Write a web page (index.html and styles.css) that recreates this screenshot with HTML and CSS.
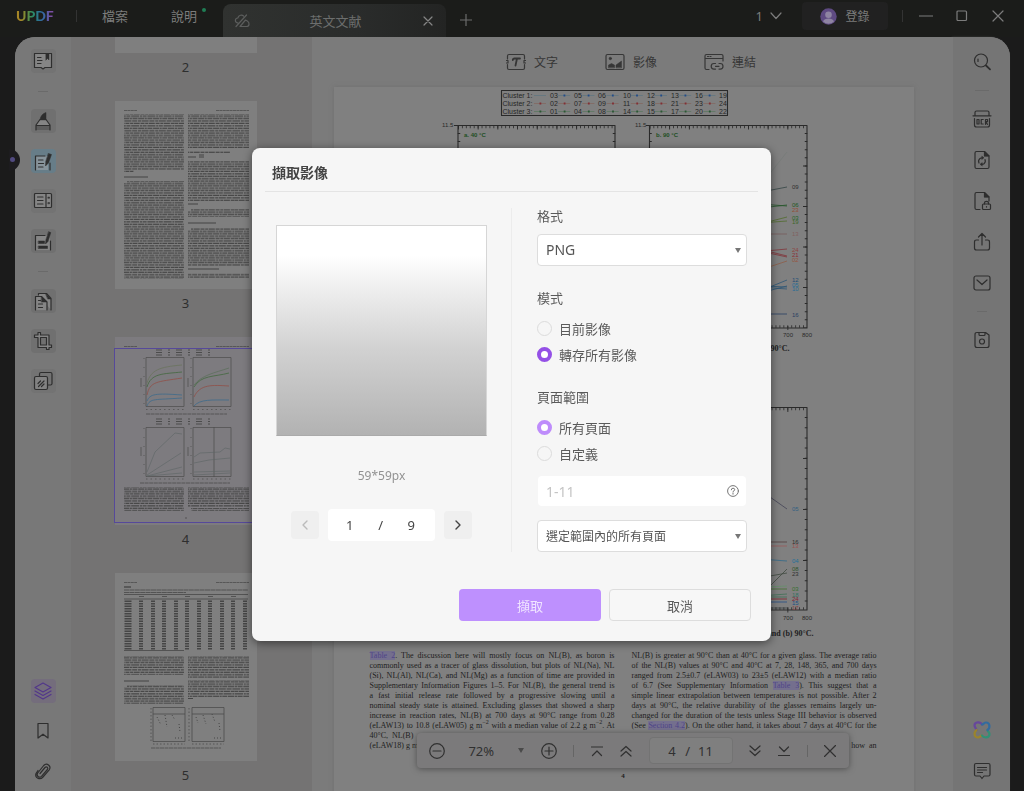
FILE: index.html
```html
<!DOCTYPE html>
<html lang="zh-Hant">
<head>
<meta charset="utf-8">
<title>UPDF</title>
<meta name="viewport" content="width=device-width, initial-scale=1">
<link rel="stylesheet" href="styles.css">
</head>
<body>
<div class="app">
  <header class="titlebar">
    <span class="logo">UPDF</span>
    <span class="bar-sep"></span>
    <nav class="menu">
      <button type="button" class="menu-item">檔案</button>
      <button type="button" class="menu-item">說明<i class="menu-dot"></i></button>
    </nav>
    <div class="tab">
      <svg class="tab-icon" width="16" height="14" viewBox="0 0 16 14"><path d="M2 12.500 12.500 1M4 9C.5 8.500.5 4.500 3.800 4 4.800.8 8 .5 9.500 2M6 12.500h6.500c3 0 3.500-4 .8-5.500L11.500 6z"/></svg>
      <span class="tab-name">英文文献</span>
      <button type="button" class="icon-btn tab-close" aria-label="關閉分頁"><svg width="10" height="10" viewBox="0 0 10 10"><path d="m1 1 8 8M9 1 1 9"/></svg></button>
    </div>
    <button type="button" class="icon-btn add-tab" aria-label="新增分頁"><svg width="12" height="12" viewBox="0 0 12 12"><path d="M6 0v12M0 6h12"/></svg></button>
    <div class="window-tools">
      <button type="button" class="icon-btn count">1<svg width="12" height="8" viewBox="0 0 12 8"><path d="m1 1 5 5.500L11 1"/></svg></button>
      <button type="button" class="login">
        <svg width="17" height="17" viewBox="0 0 17 17"><circle cx="8.500" cy="8.500" r="8.200" fill="#5e4a82" stroke="none"/><circle cx="8.500" cy="6.800" r="3.300" fill="#8e84a2" stroke="none"/><path d="M3 13.500c1-4 10-4 11 0a8 8 0 0 1-11 0z" fill="#8e84a2" stroke="none"/></svg>
        登錄
      </button>
      <span class="bar-sep"></span>
      <button type="button" class="icon-btn win first" aria-label="最小化"><svg width="14" height="14" viewBox="0 0 14 14"><path d="M0 7h14"/></svg></button>
      <button type="button" class="icon-btn win" aria-label="最大化"><svg width="12" height="12" viewBox="0 0 12 12"><rect x="1" y="1" width="9.500" height="9.500" rx="1"/></svg></button>
      <button type="button" class="icon-btn win" aria-label="關閉"><svg width="12" height="12" viewBox="0 0 12 12"><path d="m1 1 10 10M11 1 1 11"/></svg></button>
    </div>
  </header>

  <main class="workspace">
    <span class="notch"><i></i></span>
    <aside class="rail rail-left">
      <button type="button" class="tool" aria-label="閱讀"><span class="tile plain"><svg viewBox="0 0 20 20"><path d="M1.500 2.500h17v14H12L10 18l-2-1.500H1.500z" fill="#858585"/><path d="M4.500 6.500h3.500M4.500 9.500H9M4.500 12.500h3.500"/><path class="f" d="M13 2.500h3V9l-1.500-1.500L13 9z"/></svg></span></button>
      <i class="rail-sep"></i>
      <button type="button" class="tool" aria-label="註解"><span class="tile"><svg viewBox="0 0 20 20"><path d="M3 19v-5l4-5.500h6l4 5.500v5z" fill="#858585" stroke="none"/><path d="M3 15h14v4H3z" fill="#5c5c5c" stroke="none"/><path d="M3 19v-5l4-5.500h6l4 5.500v5M3 14.500h14"/><path class="f" d="M7 8.500q1-5.500 6-7v7z"/></svg></span></button>
      <button type="button" class="tool" aria-label="編輯 PDF"><span class="tile active"><svg viewBox="0 0 20 20"><path d="M2.500 5H15v14H2.500z" fill="#87939a" stroke="none"/><path d="M2.500 19V5h9.500M17 12v7M5.500 9h4.500M5.500 12.500h5M5.500 16h4.500"/><path class="f" d="m15.500 2.500 3 1L15.500 12l-3 3 .3-4.500z"/></svg></span></button>
      <button type="button" class="tool" aria-label="頁面"><span class="tile plain"><svg viewBox="0 0 20 20"><rect x="1.500" y="2.500" width="17" height="14" rx="1" fill="#858585"/><path d="M13 2.500v14M4.500 6h5.500M4.500 9.500h5.500M4.500 13h5.500"/><path class="f" d="M15.200 6h1.300v1.300h-1.300zM15.200 11.500h1.300v1.300h-1.300z"/></svg></span></button>
      <button type="button" class="tool" aria-label="表單"><span class="tile"><svg viewBox="0 0 20 20"><path d="M3 4.500h14V19H3z" fill="#858585" stroke="none"/><path d="M2.500 19V4.500H12M17.500 10v9"/><path class="f" d="M5.500 10h6v2.500h-6zM5.500 15h9v2.500h-9zM15.800.8l2 .8L15 10.500l-2.500 2.500.4-4z"/></svg></span></button>
      <i class="rail-sep"></i>
      <button type="button" class="tool" aria-label="轉換"><span class="tile"><svg viewBox="0 0 20 20"><path d="M5.500 4V2.500h8L18 7.500V19M2.500 19V5.500h6L14 11v8" fill="#858585" stroke="none"/><path d="M5.500 4V2.500h8L18 7.500V19M2.500 19V5.500h6L14 11v8M5.500 9.500h2M5.500 13h4M5.500 16.500h4"/><path class="f" d="M8.500 5.500 14 11H8.500zM12.500 2.500 18 8h-3z"/></svg></span></button>
      <button type="button" class="tool" aria-label="裁剪"><span class="tile"><svg viewBox="0 0 20 20"><path fill="#858585" fill-rule="evenodd" d="M5 1.500h2.500V4H16v10h2.500v2.500H16v2h-2.500v-2H5v-10H1.500V4H5zM7.500 6.500V14h6V6.500z"/></svg></span></button>
      <button type="button" class="tool" aria-label="浮水印"><span class="tile plain"><svg viewBox="0 0 20 20"><rect x="6.500" y="1.500" width="12.500" height="12.500" rx="1.500"/><rect x="1.500" y="5.500" width="13" height="13" rx="1.500" fill="#828282"/><path d="m5 12.500 2.500-2.500M5.500 15.500l5.500-5.500M8.500 15.500l2.500-2.500"/></svg></span></button>
      <span class="rail-space"></span>
      <button type="button" class="tool violet" aria-label="縮圖"><span class="tile"><svg viewBox="0 0 20 20"><path d="m10 2 8 4.500-8 4.500-8-4.500zM2 10l8 4.500L18 10M2 13.500 10 18l8-4.500"/></svg></span></button>
      <button type="button" class="tool" aria-label="書籤"><span class="tile bare"><svg viewBox="0 0 20 20"><path d="M5 2.500h10V17l-5-3.800L5 17z"/></svg></span></button>
      <button type="button" class="tool" aria-label="附件"><span class="tile bare"><svg viewBox="0 0 20 20"><path d="m7 12.500 5-6c1.500-1.600 3.700.3 2.400 2L8.500 15.300c-2.200 2.300-5.700-.5-3.800-3.300l6-7.500c3-3.500 8 .5 5.500 4.300L10 16c-3 3.500-8.500 1-7-3.500L5 9.500"/></svg></span></button>
    </aside>

    <section class="thumbs" aria-label="縮圖">
      <svg width="0" height="0" class="defs"><defs>
        <pattern id="txt" width="60" height="9.600" patternUnits="userSpaceOnUse">
          <g stroke="#454545" stroke-width="1.100" stroke-linecap="butt"><path d="M0 .8h60" stroke-dasharray="5 .8 3 .6 7 .8"/><path d="M0 3.200h60" stroke-dasharray="3 .6 6 .8 4 .7"/><path d="M0 5.600h60" stroke-dasharray="8 .8 2 .6 4 .8"/><path d="M0 8h60" stroke-dasharray="2 .6 5 .7 6 .6"/></g>
        </pattern>
        <g id="head" stroke="#4c4c4c" stroke-width=".8"><path d="M9 9.500h13M101 9.500h33" stroke-dasharray="3 .4"/></g>
      </defs></svg>

      <figure class="thumb"><div class="sheet sliver"></div><figcaption>2</figcaption></figure>
      <figure class="thumb"><div class="sheet">
        <svg viewBox="0 0 142 188"><use href="#head"/><g fill="url(#txt)">
          <path d="M9 13h60v56H9zM9 69h10v2H9zM12 80h57v2H12zM9 82h60v96H9zM73 13h61v34H73zM73 50h42v2H73zM73 60h61v40H73zM76 108h58v2H76zM73 110h61v6H73zM76 127h58v2H76zM73 129h61v36H73zM73 172h61v5H73z"/></g>
          <g stroke="#444" stroke-width="1"><path d="M9 76h24M73 56h8m3 0h5M84 54h5M73 103h10M73 122h28M73 168h31"/></g></svg>
      </div><figcaption>3</figcaption></figure>
      <figure class="thumb current"><div class="sheet">
        <svg viewBox="0 0 142 188"><use href="#head"/>
          <g fill="none" stroke="#4c4c4c" stroke-width=".7"><path d="M31 20.500h38v49H31zM78 20.500h38v49H78zM31 90.500h38v49H31zM78 90.500h38v49H78zM99 90v50"/><path d="M41 13h56M41 15.500h56M41 18h56M41 82h56M41 84.500h56M41 87h56" stroke-dasharray="6 6 2 6" stroke-width="1"/><path d="M31 72.500h38M78 72.500h38M31 142h38M78 142h38" stroke-dasharray="1.500 3"/><path d="M29 21v49M76 21v49M29 91v49M76 91v49" stroke-dasharray="1 8"/><path d="M26 41v9M73 41v9M26 110v9M73 110v9"/><path d="M31 77h81M25 146h90" stroke-dasharray="4 .6" stroke-width=".8"/></g>
          <g fill="none" stroke-width=".8"><path d="M32 46c4-13 12-16 35-18" stroke="#69735d"/><path d="M32 50c4-14 16-13 35-15M79 50c7-12 20-10 35-14" stroke="#42683f"/><path d="M32 58c3-14 10-13 35-17M79 60c6-13 18-12 35-11" stroke="#914f48"/><path d="M32 64c3-7 8-8 35-6M79 69c6-7 18-6 35-6M32 69c3-8 8-6 35-8" stroke="#3d6b8c"/><path d="M79 48c8-10 20-12 35-17" stroke="#5d705d"/></g>
          <g fill="none" stroke="#5c6464" stroke-width=".6"><path d="m32 135 8-20 20-19 7 1M32 138l34-22M32 139l35-9M32 139l35-3M79 120l6-4 20-1 5-4 5 1M79 126l15-3 21-2M79 135l36-1M79 138l36-2"/></g>
          <g fill="url(#txt)"><path d="M9 150h60v24H9zM73 150h61v20H73zM76 171h58v3H76z"/></g><circle cx="71" cy="181" r=".7" fill="#444"/></svg>
      </div><i class="view-frame"></i><figcaption>4</figcaption></figure>
      <figure class="thumb"><div class="sheet">
        <svg viewBox="0 0 142 188"><use href="#head"/>
          <g stroke="#484848" stroke-width=".8" fill="none"><path d="M9 14h7" stroke-width="1.400"/><path d="M9 17h124M9 19.500h62" stroke-dasharray="5 .4"/><path d="M9 21.500h124M9 26h124M9 77.500h60"/><path d="M24 23.500h5M47 23.500h5M70 23.500h5M93 23.500h5M116 23.500h5"/></g>
          <g stroke="#464646" stroke-width="4" stroke-dasharray="1.500 1" fill="none"><path d="M26 27.500v49M38 27.500v49M49 27.500v49M61 27.500v49M72 27.500v49M84 27.500v49M95 27.500v49M107 27.500v49M118 27.500v49M130 27.500v49"/><path d="M13 27.500v49" stroke-width="7"/></g>
          <g fill="url(#txt)"><path d="M9 83h60v19H9zM12 112h57v2H12zM9 114h60v17H9zM73 83h61v22H73zM73 107h61v17H73z"/></g><path d="M9 108h25M73 125.500h5" stroke="#444"/>
          <g fill="none" stroke="#464646" stroke-width=".7"><path d="M38 134.500h32v34H38zM77 134.500h32v34H77zM38 141h32M77 141h32"/><path d="M36 135v35M74 135v35M38 171h32M77 171h32" stroke-dasharray="1.500 2"/><path d="m42 144 4 8m4-10 2 12m5-12 3 5m4 4 1 8M81 144l2 6m5-8 3 9m6-10 3 8m4 1 1 8M60 165h7M99 165h7" stroke-dasharray="1 2" stroke-width="1"/><path d="M36 175h70" stroke-dasharray="4 .5"/></g></svg>
      </div><figcaption>5</figcaption></figure>
    </section>

    <section class="document">
      <div class="modes">
        <button type="button"><svg width="20" height="18" viewBox="0 0 20 18"><path d="M1.500 6V3q0-1.500 1.500-1.500h14q1.500 0 1.500 1.500v3M1.500 11.500V15q0 1.500 1.500 1.500h14q1.500 0 1.500-1.500v-3.500M.5 7.500h1.500v2.500H.5M19.500 7.500H18v2.500h1.500"/><path class="thick" d="M6.800 7q0-1.500 1.700-1.500h5.500M11 5.500l-1.500 7"/></svg>文字</button>
        <button type="button"><svg width="20" height="18" viewBox="0 0 20 18"><rect x="1" y="1.500" width="18" height="15" rx="1.500"/><circle class="f" cx="5.300" cy="5.500" r="1.300"/><path class="f" d="M3.500 14.500v-2.500l3-1.500 3 1.500v2.500zM11 14.500V12l5.500-4v6.500z"/></svg>影像</button>
        <button type="button"><svg width="20" height="18" viewBox="0 0 20 18"><path d="M19 8V3q0-1.500-1.500-1.500h-15Q1 1.500 1 3v12q0 1.500 1.500 1.500H5M1 5.500h18M3.500 3.500h1M6 3.500h1M11.500 10.500H10a2.800 2.800 0 0 0 0 5.600h1.500M15 10.500h1.200a2.800 2.800 0 0 1 0 5.600H15M11.500 13.300h3.500"/></svg>連結</button>
      </div>

      <article class="page">
        <svg class="figure" viewBox="0 0 507 255">
          <rect x="131.500" y=".5" width="226" height="25" class="ax"/>
          <g class="legend">
            <text y="8"><tspan x="132.500">Cluster 1:</tspan><tspan x="180">03</tspan><tspan x="204">05</tspan><tspan x="228">06</tspan><tspan x="253">10</tspan><tspan x="277">12</tspan><tspan x="301">13</tspan><tspan x="325">16</tspan><tspan x="349">19</tspan></text>
            <text y="16"><tspan x="132.500">Cluster 2:</tspan><tspan x="180">02</tspan><tspan x="204">07</tspan><tspan x="228">09</tspan><tspan x="253">11</tspan><tspan x="277">18</tspan><tspan x="301">21</tspan><tspan x="325">23</tspan><tspan x="349">24</tspan></text>
            <text y="24"><tspan x="132.500">Cluster 3:</tspan><tspan x="180">01</tspan><tspan x="204">04</tspan><tspan x="228">08</tspan><tspan x="253">14</tspan><tspan x="277">15</tspan><tspan x="301">17</tspan><tspan x="325">20</tspan><tspan x="349">22</tspan></text>
          </g>
          <g stroke-width=".6" stroke-dasharray="12 12.200">
            <path d="M164 5.500h184" stroke="#56727f"/><path d="M164 13.500h184" stroke="#835f55"/><path d="M164 21.500h184" stroke="#4f7355"/>
          </g>
          <g stroke-width="1.800" stroke-dasharray="1.800 22.400">
            <path d="M193.500 5.500h154" stroke="#244c88"/><path d="M169.500 13.500h180" stroke="#812f35"/><path d="M169.500 21.500h180" stroke="#2c5635"/>
          </g>
          <g class="ax"><path d="M88 238V35.500h157V238zM279.500 238V35.500H437V238z"/></g>
          <g class="ticks"><path d="M88 37h157M279.500 37H437M279.500 236.500H437" stroke-width="2.500" stroke-dasharray=".8 3.140"/><path d="M88 37.500h157M279.500 37.500H437M279.500 238H437" stroke-width="4" stroke-dasharray=".9 18.800"/><path d="M436 43v190M244 43v190M89 43v190M280.500 43v190" stroke-width="2.500" stroke-dasharray="1 7.100"/><path d="M435 75.500V238" stroke-width="4" stroke-dasharray="1 39.500"/><path d="M84 35.500h4M276 35.500h4"/></g>
          <g class="tiny"><text x="72" y="37">11.5</text><text x="265" y="37">11.5</text><text x="413" y="247">700</text><text x="432" y="247">800</text></g>
          <text x="94" y="47" class="series">a. 40 °C</text><text x="286" y="47" class="series">b. 90 °C</text>
          <g class="plot">
            <path d="m386 103 31-6" stroke="#344"/><path d="m390 114 27 2M390 118l27-3" stroke="#27572c"/><path d="m390 134 27-7M390 133l27-2" stroke="#516c2d"/><path d="M390 144h27" stroke="#775a5a"/><path d="m385 158 32 8M385 162l32-3M385 160l32 7" stroke="#80333a"/><path d="m390 180 27-9" stroke="#8e5d48"/><path d="m395 199 22-9M390 197l27 2M390 203l27-7M392 196l25 1" stroke="#2c5575"/><path d="M390 224h27" stroke="#2a3f63"/><path d="m386 101 31-39" stroke="#767b78"/>
            <g class="nums"><text x="422" y="99">09</text><text x="422" y="117" fill="#205826">06</text><text x="422" y="122" fill="#924f37">23</text><text x="422" y="130" fill="#27662a">03</text><text x="422" y="134" fill="#3d682a">19</text><text x="422" y="146" fill="#806060">13</text><text x="422" y="162" fill="#8e4540">24</text><text x="422" y="167" fill="#8a2f35">21</text><text x="422" y="172" fill="#965640">02</text><text x="422" y="192" fill="#224e78">12</text><text x="422" y="197" fill="#276d97">05</text><text x="422" y="201" fill="#276d97">10</text><text x="422" y="227" fill="#2a3f63">16</text></g>
          </g>
        </svg>
        <p class="caption first">Normalized release, 40°C and 90°C.</p>
        <svg class="figure" viewBox="0 0 507 225">
          <g class="ax"><path d="M279.500 212V9.500H437V212z"/></g>
          <g class="ticks"><path d="M279.500 11H437M279.500 210.500H437" stroke-width="2.500" stroke-dasharray=".8 3.140"/><path d="M279.500 11.500H437M279.500 212H437" stroke-width="5" stroke-dasharray=".9 18.800"/><path d="M436 19v190" stroke-width="2.500" stroke-dasharray="1 9.200"/><path d="M435 60v152" stroke-width="4" stroke-dasharray="1 50"/></g>
          <g class="tiny"><text x="413" y="222">700</text><text x="432" y="222">800</text></g>
          <g class="plot"><path d="m400 99 17 12" stroke="#445"/><path d="M390 144h27" stroke="#543c3c"/><path d="M390 148h27" stroke="#9a5858"/><path d="m390 161 27 2" stroke="#326989"/><path d="m401 187 16-16M400 178l17-3" stroke="#404a40"/><path d="m395 189 22-1" stroke="#659068"/><path d="M390 191h27" stroke="#42702d"/><path d="M390 199h27M390 198l27-2" stroke="#407055"/><path d="M390 201h27" stroke="#811f29"/><path d="M390 204h27" stroke="#254e87"/><path d="M390 210h27" stroke="#3c4444"/>
            <g class="nums"><text x="422" y="113" fill="#346083">05</text><text x="422" y="146">16</text><text x="422" y="150" fill="#9a5050">13</text><text x="422" y="165" fill="#23709a">04</text><text x="422" y="173" fill="#31552f">08</text><text x="422" y="178">23</text><text x="422" y="193" fill="#367030">03</text><text x="422" y="199" fill="#367060">18</text><text x="422" y="203" fill="#802834">24</text><text x="422" y="207" fill="#245084">15</text><text x="422" y="212" fill="#8a4545">17</text></g></g>
        </svg>
        <p class="caption second">Normalized release at (a) 40°C and (b) 90°C.</p>
        <div class="columns">
          <div class="col">
            <span><mark>Table 2</mark>. The discussion here will mostly focus on NL(B), as boron is</span>
            <span>commonly used as a tracer of glass dissolution, but plots of NL(Na), NL</span>
            <span>(Si), NL(Al), NL(Ca), and NL(Mg) as a function of time are provided in</span>
            <span>Supplementary Information Figures 1–5. For NL(B), the general trend is</span>
            <span>a fast initial release rate followed by a progressive slowing until a</span>
            <span>nominal steady state is attained. Excluding glasses that showed a sharp</span>
            <span>increase in reaction rates, NL(B) at 700 days at 90°C range from 0.28</span>
            <span>(eLAW13) to 10.8 (eLAW05) g m<sup>−2</sup> with a median value of 2.2 g m<sup>−2</sup>. At</span>
            <span class="short">40°C, &nbsp;NL(B)</span>
            <span class="short">(eLAW18) g m</span>
          </div>
          <div class="col">
            <span>NL(B) is greater at 90°C than at 40°C for a given glass. The average ratio</span>
            <span>of the NL(B) values at 90°C and 40°C at 7, 28, 148, 365, and 700 days</span>
            <span>ranged from 2.5±0.7 (eLAW03) to 23±5 (eLAW12) with a median ratio</span>
            <span>of 6.7 (See Supplementary Information <mark>Table 3</mark>). This suggest that a</span>
            <span>simple linear extrapolation between temperatures is not possible. After 2</span>
            <span>days at 90°C, the relative durability of the glasses remains largely un-</span>
            <span>changed for the duration of the tests unless Stage III behavior is observed</span>
            <span>(See <mark>Section 4.2</mark>). On the other hand, it takes about 7 days at 40°C for the</span>
            <span class="short">&nbsp;</span>
            <span class="short end">how &nbsp;an</span>
          </div>
        </div>
        <p class="folio">4</p>
      </article>

      <div class="pagebar-holder">
        <div class="pagebar">
          <button type="button" class="icon-btn" aria-label="縮小"><svg width="16" height="16" viewBox="0 0 16 16"><circle cx="8" cy="8" r="7.300"/><path d="M4 8h8"/></svg></button>
          <span class="zoom">72%</span>
          <button type="button" class="icon-btn caret-btn" aria-label="縮放選單"><i class="caret"></i></button>
          <button type="button" class="icon-btn" aria-label="放大"><svg width="16" height="16" viewBox="0 0 16 16"><circle cx="8" cy="8" r="7.300"/><path d="M4 8h8M8 4v8"/></svg></button>
          <i class="pb-sep"></i>
          <button type="button" class="icon-btn" aria-label="第一頁"><svg width="12" height="12" viewBox="0 0 12 12"><path d="M.5 2h11M1.500 10.500 6 6l4.500 4.500"/></svg></button>
          <button type="button" class="icon-btn" aria-label="上一頁"><svg width="12" height="12" viewBox="0 0 12 12"><path d="m1 6 5-4.500L11 6M1 11l5-4.500 5 4.500"/></svg></button>
          <span class="pageno"><input type="text" value="4" aria-label="頁碼"><span>/</span><span>11</span></span>
          <button type="button" class="icon-btn" aria-label="下一頁"><svg width="12" height="12" viewBox="0 0 12 12"><path d="m1 1 5 4.500L11 1M1 6l5 4.500L11 6"/></svg></button>
          <button type="button" class="icon-btn" aria-label="最後一頁"><svg width="12" height="12" viewBox="0 0 12 12"><path d="M.5 10.500h11M1.500 2 6 6.500 10.500 2"/></svg></button>
          <i class="pb-sep"></i>
          <button type="button" class="icon-btn" aria-label="關閉工具列"><svg width="12" height="12" viewBox="0 0 12 12"><path d="m.5.5 11 11M11.500.5l-11 11"/></svg></button>
        </div>
      </div>
    </section>

    <aside class="rail rail-right">
      <button type="button" class="tool" aria-label="搜尋"><svg viewBox="0 0 20 20"><circle cx="9" cy="8.500" r="6.500"/><path d="M6 7v2.500"/><path class="thick" d="m14 13.500 4 3.800"/></svg></button>
      <i class="rail-sep"></i>
      <button type="button" class="tool" aria-label="OCR"><svg viewBox="0 0 20 20"><path d="M3 6.500V3.500Q3 2 4.500 2h11Q17 2 17 3.500v3M1 6.800h18M2.500 9.500V16q0 2 2 2h11q2 0 2-2V9.500"/><path d="M5 10.500h2v4.500H5zM11.200 10.500h-2v4.500h2M13.500 15.300v-4.800h2v2.200h-2l2 2.600"/></svg></button>
      <button type="button" class="tool" aria-label="轉檔"><svg viewBox="0 0 20 20"><path d="M12.500 1.500h-8q-1.500 0-1.500 1.500v14q0 1.500 1.500 1.500h11q1.500 0 1.500-1.500V6zM12.500 1.500V6H17"/><path class="f" d="M12.500 1.500V6H17z"/><path d="M7 13a3.700 3.700 0 0 1 1-4.500 3.700 3.700 0 0 1 2-.7M13 9.500a3.700 3.700 0 0 1-1 4.200 3.700 3.700 0 0 1-2 .6"/><path class="f" d="m10 6.300 2 1.500-2 1.500zM10 12.800l-2 1.500 2 1.500z"/></svg></button>
      <button type="button" class="tool" aria-label="保護"><svg viewBox="0 0 20 20"><path d="M8 18.500H4.500Q3 18.500 3 17V3q0-1.500 1.500-1.500h8L17 6v4M12.500 1.500V6H17"/><path class="f" d="M12.500 1.500V6H17z"/><rect x="10.500" y="13" width="8" height="5.500" rx="1"/><path d="M12.500 13v-1.200q0-1.500 2-1.500t2 1.500V13M14.500 15.500v.6"/></svg></button>
      <button type="button" class="tool" aria-label="分享"><svg viewBox="0 0 20 20"><path d="M6.500 8H4.500Q2.500 8 2.500 10v6q0 2 2 2h11q2 0 2-2v-6q0-2-2-2h-2M10 13V2M6.500 5 10 1.500 13.500 5"/></svg></button>
      <button type="button" class="tool" aria-label="郵件"><svg viewBox="0 0 20 20"><rect x="2" y="3" width="16" height="14" rx="2"/><path d="m5 7 5 4.500L15 7"/></svg></button>
      <i class="rail-sep narrow"></i>
      <button type="button" class="tool" aria-label="儲存"><svg viewBox="0 0 20 20"><path d="M5 2.500h8.500L17 5v10.500q0 2-2 2H5q-2 0-2-2v-11q0-2 2-2zM7 2.500v2q0 1 1 1h4q1 0 1-1v-2"/><circle cx="10" cy="11.500" r="2.500"/></svg></button>
      <span class="rail-space"></span>
      <button type="button" class="tool" aria-label="AI"><svg viewBox="0 0 20 20"><g class="petal"><path d="M10 4.500C8.500 1.500 2.500 1.500 2.500 5.500c0 2 2 3 2 4.500" stroke="#67479b"/><path d="M4.500 10c-3 2.500-2.500 7.500 1.500 7.500 2 0 2.500-2 4-2" stroke="#9a842d"/><path d="M10 15.500c2 3 7.500 2.500 7.500-1.500 0-2-2-2.500-2-4" stroke="#329075"/><path d="M15.500 10c3-2 2.500-7.500-1.500-7.500-2 0-2.500 2-4 2" stroke="#326b9e"/></g></svg></button>
      <button type="button" class="tool" aria-label="評論"><svg viewBox="0 0 20 20"><path d="M4 2.500h12.500Q18 2.500 18 4v9.500q0 1.500-1.500 1.500H12l-2 2.500L8 15H4q-1.500 0-1.500-1.500V4q0-1.500 1.500-1.500zM5.500 6.500h9M5.500 9h9M5.500 11.500h5"/></svg></button>
    </aside>
  </main>
</div>

<div class="overlay">
  <form class="dialog" role="dialog" aria-labelledby="dlg-title">
    <h1 id="dlg-title">擷取影像</h1>
    <div class="dialog-body">
      <div class="preview-side">
        <div class="preview"></div>
        <p class="dims">59*59px</p>
        <div class="pager">
          <button type="button" class="step" disabled aria-label="上一張"><svg width="6" height="10" viewBox="0 0 6 10"><path d="M5 1 1 5l4 4"/></svg></button>
          <span class="pager-box"><input type="text" value="1" aria-label="影像編號"><span>/</span><span>9</span></span>
          <button type="button" class="step" aria-label="下一張"><svg width="6" height="10" viewBox="0 0 6 10"><path d="m1 1 4 4-4 4"/></svg></button>
        </div>
      </div>
      <div class="options">
        <label class="field-label" for="format">格式</label>
        <span class="select"><select id="format" class="latin"><option>PNG</option></select><i class="caret"></i></span>
        <fieldset>
          <legend class="field-label">模式</legend>
          <label class="radio"><input type="radio" name="mode">目前影像</label>
          <label class="radio"><input type="radio" name="mode" checked>轉存所有影像</label>
        </fieldset>
        <fieldset class="range">
          <legend class="field-label">頁面範圍</legend>
          <label class="radio pale"><input type="radio" name="range" checked>所有頁面</label>
          <label class="radio"><input type="radio" name="range">自定義</label>
        </fieldset>
        <div class="range-input">
          <input type="text" placeholder="1-11" aria-label="自定義頁面範圍">
          <svg width="12" height="12" viewBox="0 0 12 12"><circle cx="6" cy="6" r="5.400"/><path d="M4.300 4.800Q4.300 3.200 6 3.200t1.700 1.500Q7.700 5.700 6 6.500v.6M6 8.300v.9"/></svg>
        </div>
        <span class="select"><select aria-label="頁面篩選"><option>選定範圍內的所有頁面</option></select><i class="caret"></i></span>
      </div>
    </div>
    <footer class="actions">
      <button type="submit" class="primary">擷取</button>
      <button type="button" class="secondary">取消</button>
    </footer>
  </form>
</div>
</body>
</html>
```
FILE: styles.css
```css
* { box-sizing: border-box; }
body { margin: 0; background: #1b1b1b; font-family: "Noto Sans", "Noto Sans CJK TC", sans-serif; font-size: 13px; color: #2e2e2e; }
button, input, select { font: inherit; color: inherit; }
button { padding: 0; border: 0; background: none; }
svg { flex: none; display: block; fill: none; stroke: currentColor; stroke-linecap: round; stroke-linejoin: round; }
p, figure, h1, fieldset { margin: 0; padding: 0; border: 0; }

.app { display: flex; flex-direction: column; height: 100vh; overflow: hidden; }

/* title bar */
.titlebar { display: flex; align-items: center; height: 37px; flex: none; padding-bottom: 5px; color: #7c7c7c; background: #1b1c1a; }
.titlebar svg { stroke-width: 1.2; }
.logo { margin-left: 16px; width: 41px; font: 900 14px/20px Lato, sans-serif; color: transparent; background: linear-gradient(90deg, #a58526 12%, #6c8f3c 26%, #2b8a63 40%, #2c6f9b 58%, #3f62a5 72%, #7c4fa5 84%); background-clip: text; -webkit-background-clip: text; }
.bar-sep { width: 1px; height: 12px; background: #333; }
.logo + .bar-sep { margin-left: 19px; }
.menu { display: flex; gap: 43px; margin-left: 25px; }
.menu-item { position: relative; line-height: 20px; }
.menu-dot { position: absolute; right: -9px; top: 2px; width: 4px; height: 4px; border-radius: 50%; background: #1f7d54; }
.tab { display: flex; align-items: center; align-self: flex-end; width: 223px; height: 33px; margin: 0 0 -5px 26px; padding: 0 13px 0 11px; border-radius: 8px 8px 0 0; background: linear-gradient(90deg, #303230, #2a2c2b 60%, #232423); }
.tab-icon { color: #5c5e5d; }
.tab-name { flex: 1; text-align: center; line-height: 20px; padding-right: 2px; color: #6c6e6d; }
.icon-btn { display: flex; align-items: center; justify-content: center; }
.tab-close { color: #858585; }
.add-tab { margin: 8px 0 0 14px; color: #6c6c6c; }
.window-tools { display: flex; align-items: center; margin-left: auto; padding-right: 16px; }
.count { gap: 7px; margin-right: 20px; }
.login { display: flex; align-items: center; justify-content: center; gap: 8px; width: 86px; height: 28px; margin-right: 14px; border-radius: 4px; background: #212121; font-size: 12px; }
.win { width: 20px; margin-left: 16px; }
.win.first { margin-left: 13px; }

/* workspace */
.workspace { position: relative; flex: 1; min-height: 0; display: flex; margin: 0 14px 0 15px; border-radius: 20px 20px 0 0; background: #7b7b7b; }
.notch { position: absolute; left: -6px; top: 112px; width: 11px; height: 22px; border-radius: 0 11px 11px 0; background: #1d1c1f; }
.notch i { position: absolute; left: 1px; top: 8px; width: 5px; height: 5px; border-radius: 50%; background: #514a80; }
.rail { width: 56px; flex: none; display: flex; flex-direction: column; align-items: center; color: #2e2e2e; }
.rail-left { padding-top: 4px; background: #787878; border-radius: 20px 0 0 0; }
.rail-right { width: 57px; padding-top: 4px; background: #757575; border-radius: 0 20px 0 0; box-shadow: -1px 0 2px #7272727f; }
.tool { height: 40px; display: flex; align-items: center; justify-content: center; flex: none; }
.rail-right .tool { height: 41px; }
.tool svg { width: 20px; height: 20px; stroke-width: 1.2; }
.f { fill: currentColor; stroke-width: .5; }
.thick { stroke-width: 1.8; }
.tile { display: grid; place-items: center; width: 25px; height: 24px; border-radius: 4px; background: #707070; }
.tile.plain { background: #737373; }
.tile.bare { background: none; }
.tile.active { background: #677d88; }
.violet { color: #52378a; }
.violet .tile { background: #746d7c; }
.petal { stroke-width: 2.2; }
.rail-sep { width: 10px; height: 20px; flex: none; background: linear-gradient(#6a6a6a, #6a6a6a) center / 100% 1px no-repeat; }
.rail-right .rail-sep { width: 14px; height: 16px; }
.rail-right .rail-sep.narrow { width: 10px; }
.rail-space { flex: 1; }

.thumbs { width: 241px; flex: none; display: flex; flex-direction: column; align-items: center; padding-right: 12px; overflow: hidden; background: #747373; }
.defs { position: absolute; }
.thumb { position: relative; width: 142px; flex: none; }
.sheet { background: #7f7f7f; }
.sliver { height: 16px; }
.sheet svg { width: 100%; stroke: none; stroke-linecap: butt; }
.current .sheet { background: #7d7b7f; }
.view-frame { position: absolute; inset: 11px 0 50px -1px; border: 1px solid #56499a; }
.thumb figcaption { height: 48px; padding-top: 4px; text-align: center; font-size: 13px; line-height: 20px; }

.document { position: relative; flex: 1; min-width: 0; display: flex; flex-direction: column; align-items: center; overflow: hidden; background: #7b7b7b; }
.modes { display: flex; justify-content: center; gap: 47px; height: 50px; flex: none; padding-right: 3px; }
.modes button { display: flex; align-items: center; gap: 8px; font-size: 12px; color: #363636; }
.modes svg { stroke-width: 1.2; }
.page { width: 580px; max-width: 100%; flex: none; min-height: 720px; margin-left: -18px; padding: 3px 37px 0 36px; background: #808080; box-shadow: 0 0 4px #6f6f6f; font-family: "Liberation Serif", serif; color: #1e1e1e; }
.figure { width: 100%; font-family: "Liberation Sans", sans-serif; stroke: none; }
.ax { fill: none; stroke: #2a2a2a; stroke-width: 1.1; }
.ticks { stroke: #2a2a2a; fill: none; }
.legend { font-size: 7px; fill: #262626; }
.figure g { stroke-linecap: butt; }
.tiny { font-size: 6px; fill: #2a2a2a; }
.series { font-size: 6px; font-weight: 700; fill: #214f24; }
.plot { stroke-width: .8; }
.nums { font-size: 6px; fill: #303030; stroke: none; }
.caption { font-size: 8px; font-weight: 700; line-height: 10px; text-align: right; }
.caption.first { margin-top: -1px; padding-right: 87px; height: 54px; }
.caption.second { padding-right: 63px; padding-top: 6px; height: 28px; }
.columns { display: grid; grid-template-columns: minmax(0, 1fr) minmax(0, 1fr); gap: 17px; font-size: 8px; line-height: 10px; }
.col span { display: block; height: 10px; white-space: nowrap; text-align: justify; text-align-last: justify; }
.col .short { text-align-last: left; }
.col .end { text-align-last: right; }
.col sup { font-size: 6px; line-height: 0; }
mark { background: #746f8e; color: #4f4588; }
.folio { text-align: center; padding-top: 20px; font-size: 7px; font-weight: 700; line-height: 10px; }

.pagebar-holder { position: absolute; left: 0; right: 0; bottom: 23px; display: flex; justify-content: center; }
.pagebar { display: flex; align-items: center; width: 432px; height: 35px; padding: 0 12px; justify-content: space-between; border-radius: 4px; background: #7b7a7b; box-shadow: 0 1px 6px #4f4f4f; color: #303030; font-size: 13px; }
.pagebar svg { stroke-width: 1.2; }
.zoom { width: 40px; text-align: center; }
.caret { width: 0; height: 0; border: 3px solid transparent; border-top: 5px solid #4a4a4a; border-bottom: 0; }
.pb-sep { width: 1px; height: 12px; background: #656565; }
.pageno { display: flex; align-items: center; justify-content: center; gap: 8px; width: 84px; height: 27px; border: 1px solid #737373; border-radius: 4px; background: #7f7f7f; }
.pageno input { width: 9px; padding: 0; border: 0; background: none; }

/* dialog */
.overlay { position: fixed; inset: 0; display: grid; place-items: center; padding: 0 1px 2px 0; }
.dialog { width: 519px; max-width: 100%; padding-bottom: 20px; border-radius: 8px; background: #f6f6f6; box-shadow: 0 2px 10px #0000007f; color: #5a5a5a; }
.dialog h1 { margin: 0 13px; height: 44px; padding: 3px 0 0 7px; border-bottom: 1px solid #e4e4e4; font-size: 14px; font-weight: 700; line-height: 44px; color: #444; }
.dialog-body { display: grid; grid-template-columns: 1fr 259px; margin-top: 16px; }
.preview-side { display: flex; flex-direction: column; align-items: center; padding-top: 17px; border-right: 1px solid #ececec; }
.preview { width: 211px; height: 211px; border: 1px solid #d6d6d6; border-bottom-color: #aaa; background: linear-gradient(#fff 14%, #d2d2d2 58%, #b2b2b2); }
.dims { margin: 31px 0 24px; font-size: 12px; line-height: 18px; color: #929292; }
.pager { display: flex; align-items: center; gap: 9px; }
.step { display: grid; place-items: center; width: 28px; height: 28px; border-radius: 4px; background: #efefef; color: #444; }
.step svg { stroke-width: 1.4; }
.step:disabled { color: #bbb; }
.pager-box { display: flex; align-items: center; justify-content: space-between; width: 107px; height: 32px; padding: 0 20px 0 18px; border-radius: 4px; background: #fff; color: #444; }
.pager-box input { width: 8px; padding: 0; border: 0; background: none; }
.options { display: flex; flex-direction: column; padding: 0 24px 0 25px; }
.field-label { display: block; padding: 0; height: 18px; margin-bottom: 8px; line-height: 16px; }
.select { position: relative; display: block; }
.select select { display: block; width: 100%; height: 32px; padding: 0 8px; appearance: none; border: 1px solid #ddd; border-radius: 4px; background: #fff; font-size: 12px; color: #555; }
.select .latin { padding-bottom: 2px; font-size: 14px; }
.select .caret { position: absolute; right: 6px; top: 14px; border-top-color: #777; }
fieldset { min-width: 0; margin-top: 24px; }
fieldset.range { margin-top: 21px; }
.radio { display: flex; align-items: center; gap: 7px; height: 26px; padding-bottom: 1px; }
.radio input { appearance: none; width: 15px; height: 15px; margin: 0; border: 1px solid #dcdcdc; border-radius: 50%; }
.radio input:checked { border: 4px solid #9450e6; background: #fff; }
.pale input:checked { border-color: #be8cfb; }
.range-input { display: flex; align-items: center; justify-content: space-between; height: 30px; margin: 9px 1px 14px; padding: 0 7px 0 8px; border-radius: 4px; background: #fff; color: #777; }
.range-input input { width: 120px; padding: 0; border: 0; background: none; font-size: 14px; }
.range-input input::placeholder { color: #c4c4c4; }
.actions { display: flex; justify-content: flex-end; gap: 8px; margin-top: 37px; padding-right: 20px; }
.actions button { width: 142px; height: 32px; border-radius: 4px; }
.primary { background: #be90fe; color: #f0e4ff; }
.secondary { border: 1px solid #ddd; background: #f7f7f7; }
```
